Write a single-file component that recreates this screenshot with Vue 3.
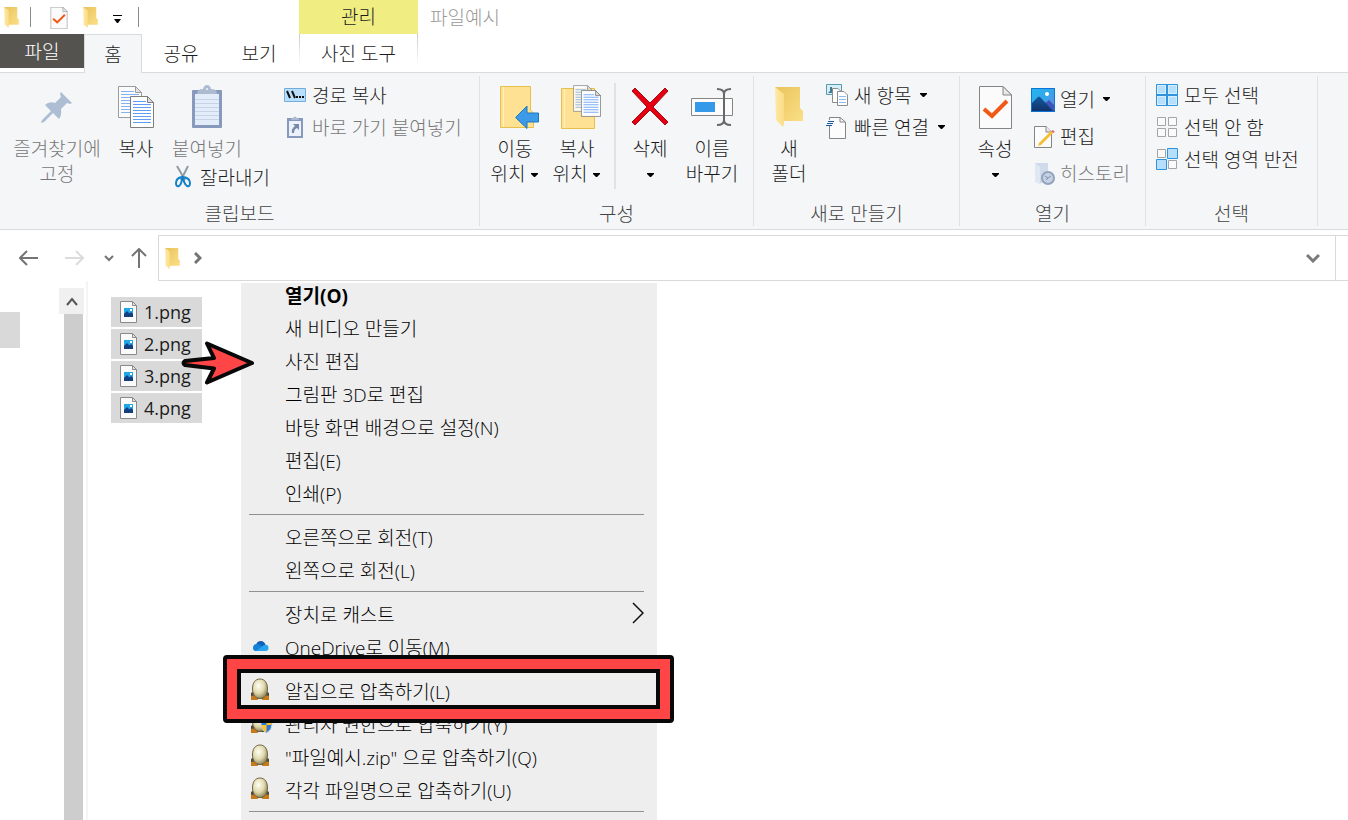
<script setup>
import { ref } from 'vue'

// 리본 탭
const tabs = ['홈', '공유', '보기']
const activeTab = ref('홈')

// 파일 목록
const files = ref([
  { name: '1.png', selected: true },
  { name: '2.png', selected: true },
  { name: '3.png', selected: true },
  { name: '4.png', selected: true }
])

// 컨텍스트 메뉴 (구분선 기준으로 묶음)
const menuGroups = [
  [
    { text: '열기(O)', bold: true },
    { text: '새 비디오 만들기' },
    { text: '사진 편집' },
    { text: '그림판 3D로 편집' },
    { text: '바탕 화면 배경으로 설정(N)' },
    { text: '편집(E)' },
    { text: '인쇄(P)' }
  ],
  [{ text: '오른쪽으로 회전(T)' }, { text: '왼쪽으로 회전(L)' }],
  [
    { text: '장치로 캐스트', sub: true },
    { text: 'OneDrive로 이동(M)', icon: 'cloud' }
  ],
  [
    { text: '알집으로 압축하기(L)', icon: 'egg' },
    { text: '관리자 권한으로 압축하기(Y)', icon: 'egg-shield' },
    { text: '"파일예시.zip" 으로 압축하기(Q)', icon: 'egg' },
    { text: '각각 파일명으로 압축하기(U)', icon: 'egg' }
  ],
  []
]

function toggleFile(file) {
  file.selected = !file.selected
}
</script>

<template>
  <div class="explorer">
    <!-- 공용 아이콘 -->
    <svg class="defs" aria-hidden="true">
      <defs>
        <linearGradient id="g-folder" x1="0" y1="0" x2="1" y2="1">
          <stop offset="0" stop-color="#e9c35c" />
          <stop offset="1" stop-color="#fbdf86" />
        </linearGradient>
        <linearGradient id="g-flap" x1="0" y1="0" x2="1" y2="0">
          <stop offset="0" stop-color="#ffe9a8" />
          <stop offset="1" stop-color="#fbdc85" />
        </linearGradient>
        <linearGradient id="g-sky" x1="0" y1="0" x2="1" y2="1">
          <stop offset="0" stop-color="#1fb5ee" />
          <stop offset=".5" stop-color="#35a6ea" />
          <stop offset="1" stop-color="#7a7be0" />
        </linearGradient>
        <linearGradient id="g-hill" x1="0" y1="0" x2="0" y2="1">
          <stop offset="0" stop-color="#12599c" />
          <stop offset="1" stop-color="#12306a" />
        </linearGradient>
        <radialGradient id="g-egg" cx=".4" cy=".35" r=".7">
          <stop offset="0" stop-color="#fffff4" />
          <stop offset=".55" stop-color="#e0d8ac" />
          <stop offset="1" stop-color="#857a4c" />
        </radialGradient>
      </defs>
      <symbol id="folder" viewBox="0 0 28 40">
        <path d="M0 0H25V21L28 24V34H8z" fill="url(#g-folder)" />
        <path d="M0 0L9 7V36L8 40L1 33z" fill="url(#g-flap)" />
      </symbol>
      <symbol id="check-doc" viewBox="0 0 33 43">
        <path d="M.5 .5H24L32.500 9V42.500H.5z" fill="#fbfbfb" stroke="#858585" />
        <path d="M24 .5V9H32.500z" fill="#e9e9e9" stroke="#858585" />
        <path d="M5 23L13 30L28 15" fill="none" stroke="#f15a16" stroke-width="4" />
      </symbol>
      <symbol id="text-doc" viewBox="0 0 24 32">
        <path d="M.5 .5H17.500L23.500 6.500V31.500H.5z" fill="#fff" stroke="#7d7d7d" />
        <path d="M17.500 .5V6.500H23.500z" fill="#ddd" stroke="#7d7d7d" />
        <path d="M3 5.500H16M3 8.500H21M3 11.500H21M3 14.500H21M3 17.500H21M3 20.500H21M3 23.500H21M3 26.500H21" stroke="#5f9df5" />
      </symbol>
      <symbol id="photo" viewBox="0 0 24 24">
        <path d="M0 0H24V24H0z" fill="url(#g-sky)" />
        <path d="M13 16L18 12L24 18V24H13z" fill="#3e55b8" />
        <path d="M0 16L7 9Q8 8 9 9L23 24H0z" fill="url(#g-hill)" />
        <circle cx="16" cy="6" r="2" fill="#fff" />
        <path d="M.5 .5H23.500V23.500H.5z" fill="none" stroke="#0c74d4" />
      </symbol>
      <symbol id="caret" viewBox="0 0 9 5">
        <path d="M1 0H8V1L5 4H4L1 1z" fill="#000" />
      </symbol>
      <symbol id="egg" viewBox="0 0 20 23">
        <path d="M1 15L4 13H16L19 15V21H1z" fill="#4f4a3c" />
        <path d="M1 22V18L6 17L8 22zM19 22V18L14 17L12 22z" fill="#c87a1a" />
        <path d="M10 1C15 1 17.500 5 17.500 11C17.500 17 14 20.500 10 20.500S2.500 17 2.500 11C2.500 5 5 1 10 1z" fill="url(#g-egg)" stroke="#6f6748" />
      </symbol>
      <symbol id="egg-shield" viewBox="0 0 23 23">
        <path d="M1 15L4 13H16L19 15V21H1z" fill="#4f4a3c" />
        <path d="M1 22V18L6 17L8 22z" fill="#c87a1a" />
        <ellipse cx="10" cy="11" rx="7.500" ry="9.500" fill="url(#g-egg)" stroke="#6f6748" />
        <path d="M11 9Q14 9 16.500 7Q19 9 22 9V14Q22 19 16.500 22Q11 19 11 14z" fill="#2d78d6" stroke="#d5dde6" />
        <path d="M16.500 8Q19 9.500 21.500 9.500V14H16.500zM11.500 14H16.500V21.500Q11.500 18.500 11.500 14z" fill="#fbc52e" />
      </symbol>
      <symbol id="cloud" viewBox="0 0 17 12">
        <path d="M4 5Q5 1 9 1Q12 1 13.500 4.500L11 8L3 7z" fill="#0f5fb8" />
        <path d="M1 8Q1 4 5 4Q8 4 12 8L10 11H4Q1 11 1 8z" fill="#1480d8" />
        <path d="M4 11L12 5Q16.500 4 16.500 8Q16.500 11 13.500 11z" fill="#27a4f0" />
      </symbol>
    </svg>

    <header class="top">
      <div class="top-left">
        <div class="quick">
          <svg class="q-folder"><use href="#folder" /></svg>
          <span class="q-line"></span>
          <button class="plain q-doc" aria-label="속성"><svg width="18" height="22"><use href="#check-doc" /></svg></button>
          <button class="plain q-new" aria-label="새 폴더"><svg class="q-folder"><use href="#folder" /></svg></button>
          <button class="plain q-more" aria-label="빠른 실행 도구 모음 사용자 지정">
            <svg width="9" height="8" viewBox="0 0 9 8"><path d="M0 .5H9" stroke="#000" /><path d="M1 4H8L5 8H4z" /></svg>
          </button>
          <span class="q-line"></span>
        </div>
        <nav class="tabs">
          <button class="tab file-tab">파일</button>
          <button
            v-for="tab in tabs"
            :key="tab"
            class="tab"
            :class="{ active: activeTab === tab }"
            @click="activeTab = tab"
          >
            {{ tab }}
          </button>
        </nav>
      </div>
      <div class="tool-tab">
        <div class="tool-head">관리</div>
        <button class="tab tool-name">사진 도구</button>
      </div>
      <div class="title">파일예시</div>
    </header>

    <section class="ribbon">
      <div class="group clipboard">
        <div class="group-body">
          <button class="big off pin">
            <svg width="32" height="42" viewBox="0 0 32 42">
              <path d="M20 6L31 17L29 18L26 17L20 23Q21 29 18 33L12 27L3 36L0 37L1 34L10 25L4 19Q8 15 14 17L20 11L19 8z" fill="#adbdd3" />
            </svg>
            <span>즐겨찾기에<br />고정</span>
          </button>
          <button class="big copy">
            <svg width="36" height="42" viewBox="0 0 36 42">
              <use href="#text-doc" width="24" height="32" opacity=".75" />
              <use href="#text-doc" x="12" y="10" width="24" height="32" />
            </svg>
            <span>복사</span>
          </button>
          <div class="paste-col">
            <button class="big off paste">
              <svg width="32" height="44" viewBox="0 0 32 44">
                <rect x="1" y="5" width="30" height="38" rx="1" fill="#8799bd" />
                <path d="M4 9H28V40H4z" fill="#e3ecf9" />
                <path d="M4 14.500H28M4 18.500H28M4 22.500H28M4 26.500H28M4 30.500H28M4 34.500H28" stroke="#c7d3e6" />
                <path d="M6 9Q6 4 12 4Q13 0 16 0T20 4Q26 4 26 9z" fill="#adbbd0" />
                <circle cx="16" cy="4" r="1" fill="#f5f6f8" />
              </svg>
              <span>붙여넣기</span>
            </button>
            <button class="small cut">
              <svg width="18" height="24" viewBox="0 0 18 24">
                <path d="M3 1L11 15M14 1L7 15" stroke="#949ba1" stroke-width="2" />
                <path d="M8 12Q2 13 2 18Q2 22 5 21Q8 19 8 12zM9 12Q16 13 16 18Q16 22 13 21Q10 19 9 12z" fill="none" stroke="#1482c8" stroke-width="2" />
              </svg>
              <span>잘라내기</span>
            </button>
          </div>
          <div class="stack">
            <button class="small">
              <svg width="22" height="14" viewBox="0 0 22 14">
                <path d="M.5 .5H21.500V13.500H.5z" fill="#b9dffc" stroke="#74addb" />
                <path d="M3 3L6 10M8 3L11 10" stroke="#111" stroke-width="2" />
                <path d="M12 9H14M15 9H17M18 9H20" stroke="#111" stroke-width="2" />
              </svg>
              <span>경로 복사</span>
            </button>
            <button class="small off">
              <svg width="22" height="24" viewBox="0 0 22 24">
                <path d="M3 3H19V23H3z" fill="#8799bd" />
                <path d="M5 6H17V21H5z" fill="#edf2fa" />
                <path d="M7 5Q7 3 9 3Q11 0 13 3Q15 3 15 5z" fill="#adbbd0" />
                <path d="M9 9H15V15L13 13Q10 14 10 18L8 18Q7 14 11 11z" fill="#7489ab" />
              </svg>
              <span>바로 가기 붙여넣기</span>
            </button>
          </div>
        </div>
        <div class="group-name">클립보드</div>
      </div>

      <div class="group organize">
        <div class="group-body">
          <button class="big">
            <svg width="48" height="44" viewBox="-8 0 48 44">
              <path d="M1.500 1.500H31.500V25L34.500 28V42.500H1.500z" fill="#fee192" stroke="#e6c04a" />
              <path d="M4.500 2V42" stroke="#fff0c0" />
              <path d="M16.500 32.500L28 21V28H39.500V37H28V43.500z" fill="#3c9ae8" stroke="#2179bd" />
            </svg>
            <span>이동<br />위치 <svg class="caret"><use href="#caret" /></svg></span>
          </button>
          <button class="big">
            <svg width="48" height="46" viewBox="-8 0 48 46">
              <path d="M.5 4.500H33.500V44.500H.5z" fill="#fee192" stroke="#e6c04a" />
              <path d="M3.500 5V44" stroke="#fff0c0" />
              <use href="#text-doc" x="12" y="1" width="20" height="27" opacity=".8" />
              <use href="#text-doc" x="20" y="6" width="20" height="27" />
            </svg>
            <span>복사<br />위치 <svg class="caret"><use href="#caret" /></svg></span>
          </button>
          <i class="split"></i>
          <button class="big">
            <svg width="38" height="42" viewBox="0 0 38 42">
              <path d="M4 2L19 17L34 2L37 5L22 21L37 36L34 39L19 24L4 39L1 36L16 21L1 5z" fill="#e60012" stroke="#a50c16" />
            </svg>
            <span>삭제<br /><svg class="caret"><use href="#caret" /></svg></span>
          </button>
          <button class="big">
            <svg width="42" height="42" viewBox="0 0 42 42">
              <path d="M.5 12.500H41.500V29.500H.5z" fill="#fbfbfb" stroke="#858585" />
              <path d="M4 16H24V26H4z" fill="#3399e8" />
              <path d="M26 3Q33 3 33 8Q33 3 40 3M33 6V36M26 39Q33 39 33 34Q33 39 40 39" fill="none" stroke="#686868" stroke-width="2" />
            </svg>
            <span>이름<br />바꾸기</span>
          </button>
        </div>
        <div class="group-name">구성</div>
      </div>

      <div class="group create">
        <div class="group-body">
          <button class="big">
            <svg width="28" height="40"><use href="#folder" /></svg>
            <span>새<br />폴더</span>
          </button>
          <div class="stack">
            <button class="small">
              <svg width="22" height="22" viewBox="0 0 22 22">
                <path d="M.5 .5H15.500V10.500H.5z" fill="#d8eef6" stroke="#5b9ab4" />
                <path d="M2 9L6 5L10 9zM4 3H6V7H4z" fill="#3d7d8d" />
                <path d="M6.500 4.500H12L15.500 8V18.500H6.500z" fill="#fff" stroke="#8d8d8d" />
                <path d="M11.500 7.500H18L21.500 11V21.500H11.500z" fill="#fff" stroke="#8d8d8d" />
                <path d="M13 12.500H20M13 15.500H20M13 18.500H20" stroke="#8cbcf0" />
              </svg>
              <span>새 항목</span><svg class="caret"><use href="#caret" /></svg>
            </button>
            <button class="small">
              <svg width="22" height="23" viewBox="0 0 22 23">
                <path d="M3.500 1.500H14L19.500 6V22.500H3.500z" fill="#fcfcfc" stroke="#858585" />
                <path d="M14 1V6H19" fill="none" stroke="#858585" />
                <path d="M3 4H9V10H1V6z" fill="#f5f6f8" />
                <path d="M2 5.500H8M1 7.500H7M0 9.500H6" stroke="#19599b" />
              </svg>
              <span>빠른 연결</span><svg class="caret"><use href="#caret" /></svg>
            </button>
          </div>
        </div>
        <div class="group-name">새로 만들기</div>
      </div>

      <div class="group open">
        <div class="group-body">
          <button class="big">
            <svg width="33" height="43"><use href="#check-doc" /></svg>
            <span>속성<br /><svg class="caret"><use href="#caret" /></svg></span>
          </button>
          <div class="stack">
            <button class="small">
              <svg width="24" height="24"><use href="#photo" /></svg>
              <span>열기</span><svg class="caret"><use href="#caret" /></svg>
            </button>
            <button class="small">
              <svg width="24" height="24" viewBox="0 0 24 24">
                <path d="M3.500 1.500H15L20.500 7V22.500H3.500z" fill="#fcfcfc" stroke="#858585" />
                <path d="M15 1V7H20" fill="#e9e9e9" stroke="#858585" />
                <path d="M8 18L20 6L22 8L10 20L7 21z" fill="#f7bd31" />
                <path d="M20 6L22 5L24 7L22 8z" fill="#e26b6b" />
              </svg>
              <span>편집</span>
            </button>
            <button class="small off">
              <svg width="24" height="24" viewBox="0 0 24 24">
                <path d="M4 1H17V18L8 22z" fill="#cfdaea" />
                <path d="M4 1L9 5V22L4 20z" fill="#dfe7f2" />
                <circle cx="17" cy="16" r="6" fill="#c6d2e4" stroke="#93a3bd" stroke-width="2" />
                <path d="M14 14L17 16L20 14M17 16L15 18" fill="none" stroke="#8091ad" />
              </svg>
              <span>히스토리</span>
            </button>
          </div>
        </div>
        <div class="group-name">열기</div>
      </div>

      <div class="group select">
        <div class="group-body">
          <div class="stack">
            <button class="small">
              <svg width="22" height="22" viewBox="0 0 22 22">
                <path d="M.5 .5H21.500V21.500H.5zM10.500 1V21M11.500 1V21M1 10.500H21M1 11.500H21" fill="#b5dffd" stroke="#2f93de" />
                <path d="M1.500 1.500H9.500V9.500H1.500zM12.500 1.500H20.500V9.500H12.500zM1.500 12.500H9.500V20.500H1.500zM12.500 12.500H20.500V20.500H12.500z" fill="none" stroke="#d9effe" />
              </svg>
              <span>모두 선택</span>
            </button>
            <button class="small">
              <svg width="22" height="22" viewBox="0 0 22 22">
                <path d="M1.500 1.500H9.500V9.500H1.500zM12.500 1.500H20.500V9.500H12.500zM1.500 12.500H9.500V20.500H1.500zM12.500 12.500H20.500V20.500H12.500z" fill="#fafafa" stroke="#a5a5a5" />
              </svg>
              <span>선택 안 함</span>
            </button>
            <button class="small">
              <svg width="22" height="22" viewBox="0 0 22 22">
                <path d="M1.500 1.500H9.500V9.500H1.500zM12.500 12.500H20.500V20.500H12.500z" fill="#fafafa" stroke="#a5a5a5" />
                <path d="M11.500 .5H21.500V10.500H11.500zM.5 11.500H10.500V21.500H.5z" fill="#b5dffd" stroke="#2f93de" />
              </svg>
              <span>선택 영역 반전</span>
            </button>
          </div>
        </div>
        <div class="group-name">선택</div>
      </div>
    </section>

    <div class="nav-bar">
      <div class="nav-buttons">
        <button class="plain" aria-label="뒤로">
          <svg width="20" height="16" viewBox="0 0 20 16" fill="none" stroke="#747474" stroke-width="2"><path d="M1 8H19M8 1L1 8L8 15" /></svg>
        </button>
        <button class="plain forward" aria-label="앞으로">
          <svg width="20" height="16" viewBox="0 0 20 16" fill="none" stroke="#dcdcdc" stroke-width="2"><path d="M1 8H19M12 1L19 8L12 15" /></svg>
        </button>
        <button class="plain recent" aria-label="최근 위치">
          <svg width="10" height="8" viewBox="0 0 10 8" fill="none" stroke="#747474" stroke-width="2"><path d="M1 2L5 6L9 2" /></svg>
        </button>
        <button class="plain" aria-label="위로">
          <svg width="16" height="20" viewBox="0 0 16 20" fill="none" stroke="#747474" stroke-width="2"><path d="M8 1V20M1 8L8 1L15 8" /></svg>
        </button>
      </div>
      <div class="address">
        <svg class="q-folder"><use href="#folder" /></svg>
        <svg width="8" height="12" viewBox="0 0 8 12" fill="none" stroke="#747474" stroke-width="3"><path d="M1 1L6 6L1 11" /></svg>
        <button class="plain drop" aria-label="이전 위치">
          <svg width="14" height="10" viewBox="0 0 14 10" fill="none" stroke="#7a7a7a" stroke-width="3"><path d="M1 2L7 8L13 2" /></svg>
        </button>
      </div>
      <div class="search"></div>
    </div>

    <main class="main">
      <aside class="side">
        <div class="side-item"></div>
        <div class="scroll">
          <button class="plain scroll-up" aria-label="위로 스크롤">
            <svg width="12" height="10" viewBox="0 0 12 10" fill="none" stroke="#555" stroke-width="2"><path d="M1 9L6 3L11 9" /></svg>
          </button>
          <div class="thumb"></div>
        </div>
      </aside>

      <ul class="files">
        <li v-for="file in files" :key="file.name">
          <button class="file" :class="{ selected: file.selected }" @click="toggleFile(file)">
            <svg width="17" height="22" viewBox="0 0 17 22">
              <path d="M.5 .5H12.500L16.500 4.500V21.500H.5z" fill="#fafafa" stroke="#8a8a8a" />
              <path d="M12.500 .5V4.500H16.500z" fill="#e4e4e4" stroke="#8a8a8a" />
              <path d="M4 7H13V16H4z" fill="#22a6ea" />
              <path d="M4 13L7 10L13 16H4zM9 13L11 11L13 13V16H9z" fill="#153e80" />
              <path d="M10 8H12V10H10z" fill="#fff" />
            </svg>
            <span>{{ file.name }}</span>
          </button>
        </li>
      </ul>

      <div class="menu">
        <ul v-for="(group, i) in menuGroups" :key="i" class="menu-group">
          <li v-for="item in group" :key="item.text">
            <button class="menu-item" :class="{ bold: item.bold }">
              <span class="menu-icon">
                <svg v-if="item.icon" :class="item.icon"><use :href="'#' + item.icon" /></svg>
              </span>
              <span class="menu-text">{{ item.text }}</span>
              <svg v-if="item.sub" class="sub" width="12" height="22" viewBox="0 0 12 22" fill="none" stroke="#111" stroke-width="1.500"><path d="M1 1L11 11L1 21" /></svg>
            </button>
          </li>
        </ul>
      </div>

      <!-- 강조 표시 -->
      <div class="mark"><div class="mark-red"><div class="mark-inner"></div></div></div>
      <svg class="arrow" width="74" height="46" viewBox="0 0 74 46">
        <path d="M72 23L27 3.500L34 18L5 21Q2 23 5 25L34 28.500L27 42.500z" fill="#ff4545" stroke="#080808" stroke-width="4" stroke-linejoin="round" />
      </svg>
    </main>
  </div>
</template>

<style>
body {
  margin: 0;
  background: #fff;
}
</style>

<style scoped>
.explorer {
  height: 100vh;
  display: flex;
  flex-direction: column;
  overflow: hidden;
  font-family: "Open Sans", "Noto Sans CJK KR", sans-serif;
  font-size: 19px;
  font-weight: 300;
  line-height: 25px;
  color: #1c1c1c;
}

.defs {
  position: absolute;
  width: 0;
  height: 0;
}

button {
  font: inherit;
  color: inherit;
  background: none;
  border: none;
  padding: 0;
  white-space: nowrap;
}

svg {
  flex: none;
}

ul {
  list-style: none;
  margin: 0;
  padding: 0;
}

.plain {
  display: flex;
  align-items: center;
  justify-content: center;
}

/* 제목 줄과 탭 */
.top {
  display: flex;
  border-bottom: 1px solid #dadbdc;
}

.top-left {
  width: 299px;
}

.quick {
  display: flex;
  align-items: center;
  height: 34px;
  padding-left: 4px;
}

.q-folder {
  width: 15px;
  height: 21px;
}

.q-line {
  width: 1px;
  height: 20px;
  margin-left: 11px;
  background: #8c8c8c;
}

.q-doc {
  margin: 2px 0 0 19px;
}

.q-new {
  margin-left: 15px;
}

.q-more {
  margin: 4px 5px 0 15px;
}

.tabs {
  display: flex;
  height: 38px;
}

.tab {
  width: 78px;
  height: 38px;
  padding-top: 2px;
}

.file-tab {
  width: 84px;
  height: 34px;
  background: #555350;
  color: #fff;
}

.tab.active {
  width: 58px;
  box-sizing: border-box;
  height: 39px;
  border: 1px solid #dadbdc;
  border-bottom: none;
  background: #f5f6f8;
}

.tool-tab {
  width: 119px;
  text-align: center;
}

.tool-head {
  height: 34px;
  line-height: 34px;
  background: #f0ee83;
}

.tool-name {
  box-sizing: border-box;
  width: 100%;
  height: 30px;
  padding-top: 8px;
  border: solid;
  border-width: 0 1px;
  border-image: linear-gradient(#c8c8c8, #fff) 1;
}

.title {
  padding-left: 12px;
  line-height: 36px;
  color: #999;
}

/* 리본 */
.ribbon {
  display: flex;
  padding: 3px 0;
  background: #f5f6f8;
  border-bottom: 1px solid #dadbdc;
}

.group {
  box-sizing: border-box;
  height: 150px;
  display: flex;
  flex-direction: column;
  justify-content: space-between;
  border-right: 1px solid #e1e2e4;
}

.group-body {
  display: flex;
  padding-left: 4px;
}

.group-name {
  line-height: 24px;
  text-align: center;
  color: #444;
}

.clipboard {
  width: 480px;
}

.clipboard .group-body {
  padding-left: 0;
}

.organize {
  width: 274px;
}

.create {
  width: 206px;
}

.open {
  width: 186px;
}

.select {
  width: 172px;
}

.select .group-body {
  padding-left: 10px;
}

.big {
  width: 62px;
  display: grid;
  grid-template-rows: 46px auto;
  justify-items: center;
  align-items: center;
  align-content: start;
  padding-top: 8px;
}

.big > span {
  margin-top: 7px;
}

.off {
  color: #777;
}

.pin {
  width: 114px;
}

.copy {
  width: 44px;
}

.paste-col {
  padding-left: 13px;
}

.paste {
  width: 72px;
}

.cut {
  padding-left: 3px;
}

.caret {
  width: 9px;
  height: 5px;
  vertical-align: middle;
}

.split {
  width: 2px;
  height: 106px;
  margin: 7px 3px 0 6px;
  background: #e1e2e4;
}

.small {
  display: flex;
  align-items: center;
  gap: 6px;
  height: 32px;
}

.small > span {
  padding-top: 2px;
}

.small > .caret {
  margin-left: 2px;
}

.small.cut {
  height: 30px;
  gap: 8px;
}

.stack {
  padding-top: 3px;
}

.clipboard .stack {
  padding-left: 14px;
}

.create .stack {
  padding-left: 6px;
}

.open .stack {
  padding: 5px 0 0 5px;
}

.open .small {
  height: 37px;
  gap: 5px;
}

/* 주소 표시줄 */
.nav-bar {
  display: flex;
  padding-top: 5px;
}

.nav-buttons {
  width: 158px;
  box-sizing: border-box;
  display: flex;
  align-items: center;
  gap: 17px;
  padding-left: 19px;
}

.forward {
  margin-left: 8px;
}

.recent {
  margin-left: 3px;
}

.address {
  flex: 1;
  display: flex;
  align-items: center;
  gap: 14px;
  height: 44px;
  padding: 0 15px 0 6px;
  border: 1px solid #d9d9d9;
}

.drop {
  margin-left: auto;
}

.search {
  width: 12px;
  border: solid #d9d9d9;
  border-width: 1px 0;
}

/* 본문 */
.main {
  flex: 1;
  min-height: 0;
  display: flex;
  position: relative;
}

.side {
  width: 86px;
  display: flex;
  justify-content: space-between;
  border-right: 2px solid #f5f5f5;
}

.side-item {
  width: 20px;
  height: 36px;
  margin-top: 31px;
  background: #d9d9d9;
}

.scroll {
  width: 25px;
  margin: 7px 2px 0 0;
  display: flex;
  flex-direction: column;
}

.scroll-up {
  height: 26px;
  background: #f0f0f0;
}

.thumb {
  flex: 1;
  margin: 0 1px 0 5px;
  background: #cdcdcd;
}

.files {
  display: flex;
  flex-direction: column;
  gap: 2px;
  padding: 16px 0 0 23px;
}

.file {
  display: flex;
  align-items: center;
  gap: 7px;
  width: 91px;
  height: 30px;
  padding-left: 9px;
  font-size: 18px;
  font-weight: 400;
}

.file.selected {
  background: #d9d9d9;
}

.menu {
  position: absolute;
  top: 2px;
  bottom: 0;
  left: 241px;
  width: 416px;
  overflow: hidden;
  background: #eee;
  color: #000;
}

.menu-group:first-child {
  margin-top: -4px;
}

.menu-group + .menu-group {
  position: relative;
  padding-top: 11px;
}

.menu-group + .menu-group::before {
  content: "";
  position: absolute;
  top: 4px;
  left: 8px;
  right: 13px;
  height: 1px;
  background: #919191;
}

.menu-item {
  display: flex;
  align-items: center;
  width: 100%;
  height: 33px;
  padding: 0 13px 0 9px;
  text-align: left;
}

.menu-item.bold {
  font-weight: 700;
}

.menu-icon {
  width: 35px;
  display: flex;
  padding-bottom: 4px;
}

.menu-text {
  flex: 1;
  padding-top: 2px;
}

.sub {
  margin-bottom: 4px;
}

.cloud {
  width: 17px;
  height: 12px;
  margin-left: 2px;
}

.egg {
  width: 20px;
  height: 23px;
}

.egg-shield {
  width: 23px;
  height: 23px;
}

.mark {
  position: absolute;
  top: 374px;
  left: 223px;
  width: 443px;
  border: 4px solid #080808;
  border-radius: 4px;
}

.mark-red {
  border: 10px solid #ff4545;
}

.mark-inner {
  height: 32px;
  border: 4px solid #080808;
}

.arrow {
  position: absolute;
  top: 59px;
  left: 180px;
}
</style>
